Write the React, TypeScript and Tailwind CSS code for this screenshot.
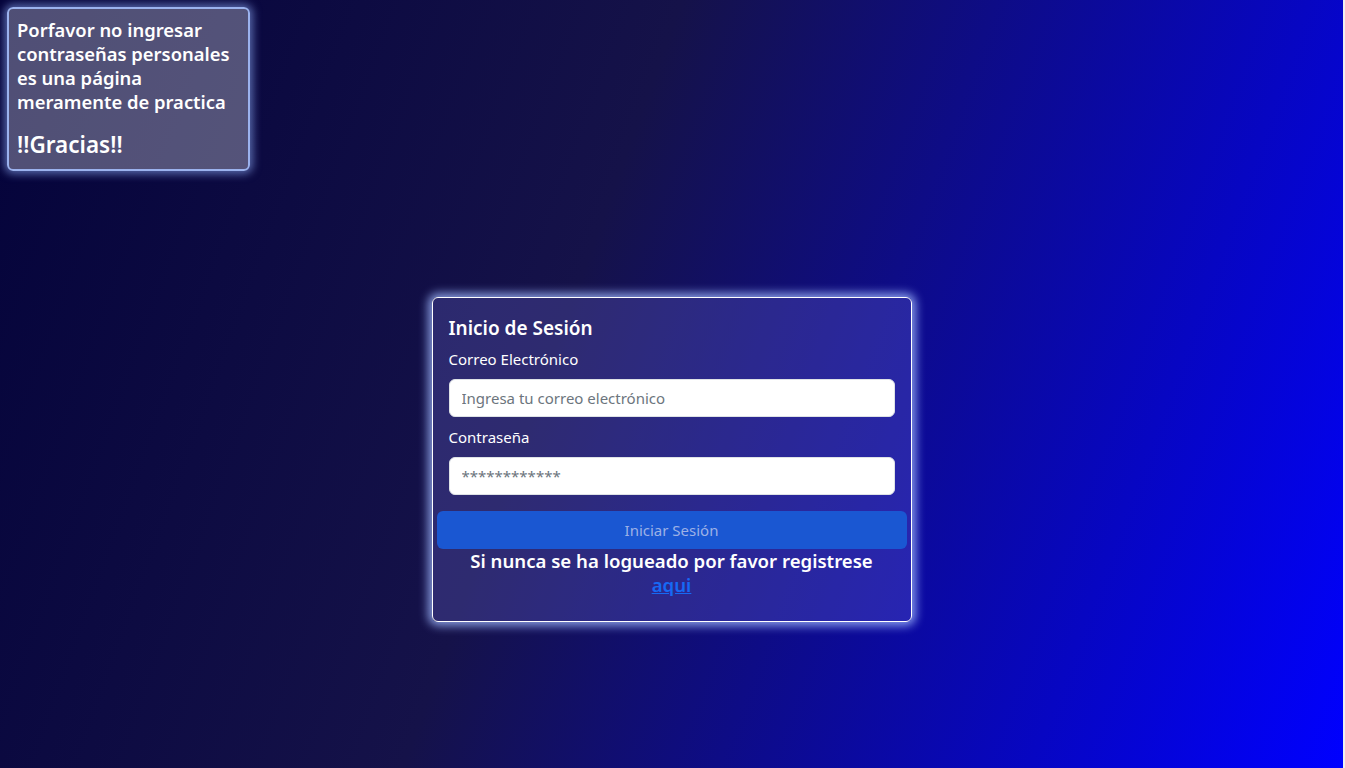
export default function App() {
  return (
    <div className="flex min-h-screen bg-[#f0f0f0] font-['Noto_Sans',sans-serif]">
      <main className="flex-1 mr-[2px] min-h-screen flex flex-col bg-[linear-gradient(110deg,#04033a_0%,#151249_42%,#0000ff_100%)] text-white">
        {/* Aviso */}
        <div className="m-[7px] w-[243px] rounded-md border-2 border-[#9bb2ee] bg-white/30 px-[8px] pt-[9px] pb-[10px] shadow-[0_0_8px_3px_rgba(150,180,255,0.55)]">
          <h5 className="text-[18.4px] font-semibold leading-[24px] mb-[16px]">
            Porfavor no ingresar contraseñas personales es una página meramente de practica
          </h5>
          <h4 className="text-[22.5px] font-semibold leading-[29px]">!!Gracias!!</h4>
        </div>

        {/* Formulario */}
        <div className="mx-auto mt-[119px] w-[480px] rounded-md border border-white bg-[rgba(122,120,232,0.25)] px-4 pt-[18px] pb-[24px] shadow-[0_0_10px_4px_rgba(160,185,255,0.8)]">
          <h5 className="text-[19px] font-semibold leading-[24px] mb-[7px]">Inicio de Sesión</h5>
          <label className="block text-[15px] leading-[24px] mb-2">Correo Electrónico</label>
          <input
            type="email"
            placeholder="Ingresa tu correo electrónico"
            className="block w-full h-[38px] rounded-md border border-[#dee2e6] bg-white px-3 text-[15px] text-[#212529] placeholder:text-[#6c757d] mb-2 outline-none"
          />
          <label className="block text-[15px] leading-[24px] mb-2">Contraseña</label>
          <input
            type="password"
            placeholder="************"
            className="block w-full h-[38px] rounded-md border border-[#dee2e6] bg-white px-3 text-[15px] text-[#212529] placeholder:text-[#6c757d] mb-4 outline-none"
          />
          <button
            disabled
            className="-mx-3 w-[470px] h-[38px] rounded-md bg-[#1a57d2] text-[15px] text-[#9db1e6]"
          >
            Iniciar Sesión
          </button>
          <p className="text-center text-[18.6px] font-semibold leading-[24px]">
            Si nunca se ha logueado por favor registrese
            <br />
            <a href="#" className="text-[#1669f5] underline">aqui</a>
          </p>
        </div>
      </main>
    </div>
  );
}
